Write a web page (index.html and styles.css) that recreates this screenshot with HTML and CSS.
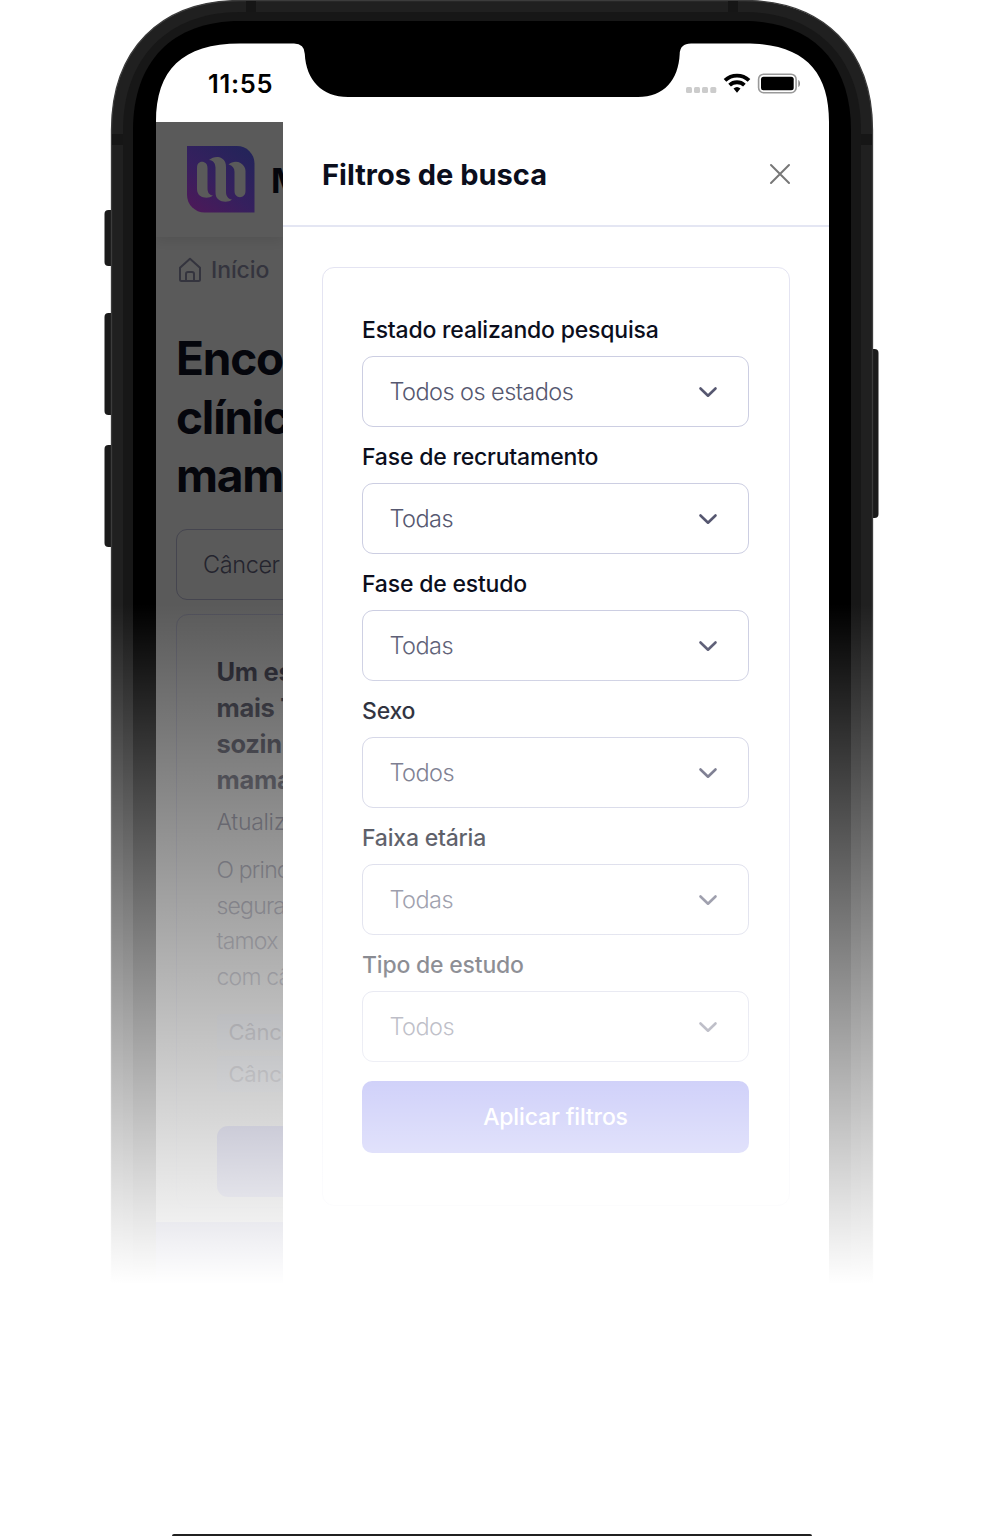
FILE: index.html
```html
<!DOCTYPE html>
<html lang="pt-BR">
<head>
<meta charset="utf-8">
<title>Filtros de busca</title>
<link rel="stylesheet" href="styles.css">
</head>
<body>
<div class="stage">
  <svg class="frame" viewBox="0 0 984 1536" aria-hidden="true">
    <g fill="#1b1b1b">
      <rect x="104.5" y="210" width="12" height="56" rx="4"/>
      <rect x="104.5" y="313" width="12" height="102" rx="4"/>
      <rect x="104.5" y="445" width="12" height="102" rx="4"/>
      <rect x="866" y="349" width="12.500" height="169" rx="4"/>
    </g>
    <path fill="#202020" stroke="#3c3c3c" stroke-width="1.300" d="M111.500 1536V130C111.500 50 160 .5 240 .5H744C824 .5 872.500 50 872.500 130V1536"/>
    <path fill="#161616" d="M112 134h12v11h-12zM860 134h12v11h-12zM246 1h10v11h-10zM728 1h10v11h-10z"/>
    <path fill="#171717" d="M123 1536V130C123 58 168 12 240 12H744C816 12 861 58 861 130V1536"/>
    <path d="M133 1536V130C133 62 172 21 240 21H744C812 21 851 62 851 130V1536"/>
    <path fill="#fff" d="M156 1536V122C156 70 182 43.500 240 43.500H294Q304.500 43.500 304.800 54C306 80 322 97 348 97H638C664 97 678.500 80 679.700 54Q680 43.500 691 43.500H745C803 43.500 829 70 829 122V1536"/>
  </svg>

  <div class="screen">
    <div class="status">
      <span class="time">11:55</span>
      <svg class="indicators" width="116" height="24" viewBox="0 0 116 24" aria-hidden="true">
        <g fill="#ccc"><rect x="0" y="15" width="6" height="6" rx="1.500"/><rect x="8" y="15" width="6" height="6" rx="1.500"/><rect x="16" y="15" width="6" height="6" rx="1.500"/><rect x="24.300" y="15" width="6" height="6" rx="1.500"/></g>
        <g fill="none" stroke="#000" stroke-width="3.800"><path d="M39 8.400a17.500 17.500 0 0 1 24 0"/><path d="M43.600 13.200a10.700 10.700 0 0 1 14.800 0"/></g>
        <path d="M47.500 16.600a5.200 5.200 0 0 1 7 0L51 20.700z"/>
        <rect x="72.600" y="2.200" width="37.500" height="18.500" rx="5" fill="none" stroke="#999" stroke-width="1.600"/>
        <rect x="75" y="4.700" width="32.700" height="13.600" rx="2.500"/>
        <path fill="#888" d="M112.300 8c2.300 1 2.300 6 0 7z"/>
      </svg>
    </div>

    <div class="body">
      <div class="page">
        <div class="topbar">
          <svg width="68" height="67" viewBox="0 0 68 67" aria-hidden="true">
            <defs><linearGradient id="brand" x1="0" y1="1" x2=".8" y2="0"><stop offset="0" stop-color="#4f1858"/><stop offset=".5" stop-color="#35205e"/><stop offset="1" stop-color="#24245a"/></linearGradient></defs>
            <path fill="url(#brand)" d="M0 0H50A17.500 17.500 0 0 1 67.500 17.500V66.500H17.500A17.500 17.500 0 0 1 0 49Z"/>
            <g fill="#5a5a5a">
              <path d="M10 22C10 17 13 15.800 15 15.800S20.500 17 20.500 22V42C20.500 46.500 22 49 26 49.500C23 52 19 52 16 51.200C12 50 10 47 10 43Z"/>
              <path d="M22 14C26 10.800 31 10 35 12.500C38 14.500 39 17 39 21V46C39 50 41 53 45 53.500C42 56.500 35 56.500 31.500 53.500C29 51.500 28.500 49 28.500 46V22C28.500 17.500 26.500 14.500 22 14Z"/>
              <path d="M41.500 18.500C45 15.500 50 15 53.500 17C57 19 58.500 22 58.500 25V45C58.500 49 56 51.200 53 51.200S47.500 49 47.500 45V26C47.500 22 45.500 19.500 41.500 18.500Z"/>
            </g>
          </svg>
          <span class="brand">M</span>
        </div>
        <div class="crumb">
          <svg width="24" height="26" viewBox="0 0 24 26" fill="none" stroke="#34343e" stroke-width="2" stroke-linejoin="round" aria-hidden="true"><path d="M2 10.800 12 1.800 22 10.800V22.500Q22 24 20.500 24H3.500Q2 24 2 22.500Z"/><path d="M8 23.500V17Q8 15 10 15H14Q16 15 16 17V23.500"/></svg>
          <span>Início</span>
        </div>
        <div class="headline">Enco<br>clínic<br>mam</div>
        <div class="search">Câncer</div>
        <div class="study">
          <div class="study-title">Um es<br>mais T<br>sozin<br>mama</div>
          <div class="study-date">Atualiz</div>
          <div class="study-text">O princ<br>segura<br>tamox<br>com câ</div>
          <div class="tag">Cânce</div>
          <div class="tag">Cânce</div>
          <div class="study-button"></div>
        </div>
        <div class="footer"></div>
      </div>

      <div class="drawer">
        <div class="drawer-head">
          <span class="drawer-title">Filtros de busca</span>
          <svg width="22" height="22" viewBox="0 0 22 22" fill="none" stroke="#777" stroke-width="2" stroke-linecap="round" aria-hidden="true"><path d="M2 2 20 20M20 2 2 20"/></svg>
        </div>
        <div class="filters">
          <div class="label">Estado realizando pesquisa</div>
          <div class="select"><span>Todos os estados</span><svg class="chev" viewBox="0 0 20 12"><path d="M2.500 2.500 10 9.700 17.500 2.500"/></svg></div>
          <div class="label">Fase de recrutamento</div>
          <div class="select"><span>Todas</span><svg class="chev" viewBox="0 0 20 12"><path d="M2.500 2.500 10 9.700 17.500 2.500"/></svg></div>
          <div class="label">Fase de estudo</div>
          <div class="select"><span>Todas</span><svg class="chev" viewBox="0 0 20 12"><path d="M2.500 2.500 10 9.700 17.500 2.500"/></svg></div>
          <div class="label">Sexo</div>
          <div class="select"><span>Todos</span><svg class="chev" viewBox="0 0 20 12"><path d="M2.500 2.500 10 9.700 17.500 2.500"/></svg></div>
          <div class="label">Faixa etária</div>
          <div class="select"><span>Todas</span><svg class="chev" viewBox="0 0 20 12"><path d="M2.500 2.500 10 9.700 17.500 2.500"/></svg></div>
          <div class="label">Tipo de estudo</div>
          <div class="select"><span>Todos</span><svg class="chev" viewBox="0 0 20 12"><path d="M2.500 2.500 10 9.700 17.500 2.500"/></svg></div>
          <div class="apply">Aplicar filtros</div>
        </div>
      </div>
    </div>
  </div>
  <div class="fade"></div>
  <div class="edge"></div>
</div>
</body>
</html>
```

FILE: styles.css
```css
* { box-sizing: border-box; }
body { margin: 0; background: #fff; font-family: Inter, "Liberation Sans", sans-serif; }
svg { display: block; flex: none; }
.stage { position: relative; width: 984px; height: 1536px; overflow: hidden; }
.frame { position: absolute; inset: 0; width: 984px; height: 1536px; }
.screen { position: relative; margin-left: 156px; width: 673px; height: 1536px; }

.status { display: flex; justify-content: space-between; height: 122px; padding: 72px 27px 0 52px; }
.time { font-size: 25.500px; line-height: 24px; font-weight: 600; letter-spacing: .7px; color: #000; }

.body { display: flex; height: 1414px; }
.page { width: 127px; flex: none; overflow: hidden; background: #5a5a5a; white-space: nowrap; color: #34343e; }
.topbar { display: flex; gap: 16px; height: 115px; padding: 24px 0 0 31px; box-shadow: 0 4px 10px rgba(0,0,0,.08); }
.brand { font-size: 34px; line-height: 70px; font-weight: 700; color: #05060c; }
.crumb { display: flex; align-items: center; gap: 9px; height: 26px; margin-top: 20px; padding-left: 22px; font-size: 23px; line-height: 28px; font-weight: 500; letter-spacing: -.1px; }
.headline { margin: 46px 0 0 20px; font-size: 46px; line-height: 58.600px; font-weight: 700; letter-spacing: -1.200px; color: #05060c; }
.search { margin: 24px -300px 0 20px; height: 71px; padding-left: 26px; border: 1.500px solid #45454f; border-radius: 11px; font-size: 23.500px; line-height: 69px; font-weight: 300; letter-spacing: -.4px; color: #24242e; }
.study { height: 594px; margin: 14px -300px 0 20px; padding: 39px 39.500px; border: 1.500px solid #4e4e58; border-radius: 12px; }
.study-title { font-size: 25.500px; line-height: 36px; font-weight: 700; letter-spacing: -.3px; color: #13131c; }
.study-date { margin-top: 6px; font-size: 23px; line-height: 36px; font-weight: 300; letter-spacing: -.3px; color: #20202c; }
.study-text { margin: 13px 0 18px; font-size: 23px; line-height: 35.800px; font-weight: 300; letter-spacing: -.8px; color: #20202c; }
.tag { width: 140px; height: 36px; margin-bottom: 6px; padding-left: 12px; border-radius: 4px; background: #565960; font-size: 22px; line-height: 36px; letter-spacing: -.2px; color: #24242e; }
.study-button { height: 71px; margin-top: 34px; border-radius: 11px; background: #232357; }
.footer { height: 314px; margin-top: 14px; background: #181850; }

.drawer { width: 546px; flex: none; background: #fff; }
.drawer-head { display: flex; align-items: center; justify-content: space-between; height: 105px; padding: 0 38px 0 39px; border-bottom: 2px solid #e4e6f3; }
.drawer-title { padding-top: 2px; font-size: 29px; font-weight: 700; color: #0b0e1c; }
.filters { width: 468px; height: 939px; margin: 39.500px 0 0 38.500px; padding: 44px 39.500px; border: 1.500px solid #e4e4f2; border-radius: 12px; }
.label { height: 36px; margin-bottom: 8px; font-size: 23px; line-height: 36px; font-weight: 500; letter-spacing: -.2px; color: #0b0e1c; white-space: nowrap; }
.select { display: flex; align-items: center; justify-content: space-between; height: 71px; margin-bottom: 12px; padding: 0 30px 0 26.500px; border: 1.500px solid #cccee2; border-radius: 11px; color: #565870; font-size: 23.500px; font-weight: 300; letter-spacing: -.55px; }
.chev { width: 20px; height: 12px; margin-top: 1px; fill: none; stroke: #565770; stroke-width: 2.600; stroke-linecap: round; stroke-linejoin: round; }
.apply { height: 72px; margin-top: 19px; border-radius: 10px; background: #6366ec; color: #fff; font-size: 23px; line-height: 72px; font-weight: 500; letter-spacing: -.15px; text-align: center; }

.fade { position: absolute; left: 0; right: 0; top: 604px; height: 932px; background: linear-gradient(rgba(255,255,255,0), #fff 680px); }
.edge { position: absolute; left: 172px; top: 1534px; width: 640px; height: 2px; border-radius: 4px 4px 0 0; background: #202020; }
```
